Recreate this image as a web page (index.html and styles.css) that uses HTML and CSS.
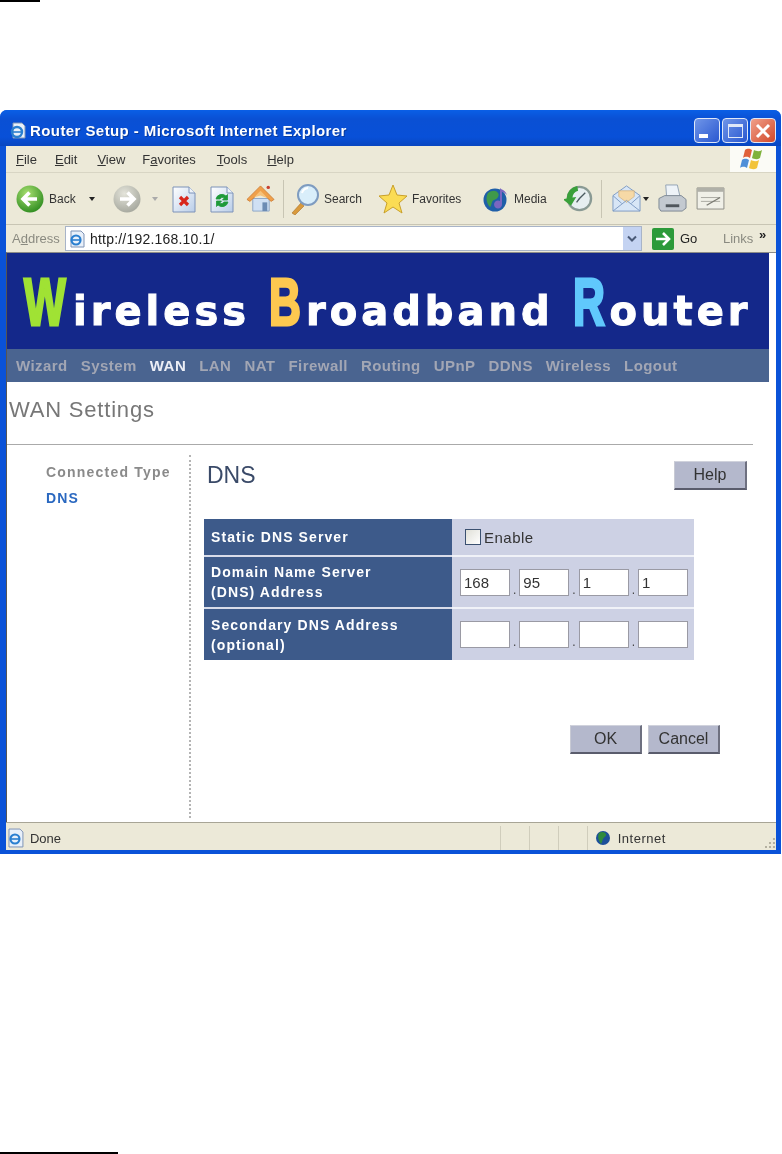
FILE: index.html

```html
<!DOCTYPE html>
<html lang="en">
<head>
  <meta charset="UTF-8">
  <title>Router Setup - Microsoft Internet Explorer</title>
  <link rel="stylesheet" href="styles.css">
</head>
<body>

  <div class="rule rule-top"></div>

  <div class="window">

    <div class="titlebar">
      <svg class="ico-title" viewBox="0 0 18 18">
        <path d="M4 1h9l3 3v12H4z" fill="#e8f0fa" stroke="#7f93b5"/>
        <circle cx="8" cy="10" r="5" fill="none" stroke="#2a7fd0" stroke-width="2.4"/>
        <path d="M3 10h10" stroke="#2a7fd0" stroke-width="1.6"/>
      </svg>
      <span class="title-text">Router Setup - Microsoft Internet Explorer</span>
      <div class="win-buttons">
        <span class="win-btn"><i class="glyph-min"></i></span>
        <span class="win-btn"><i class="glyph-max"></i></span>
        <span class="win-btn win-close">
          <svg viewBox="0 0 16 16" width="16" height="16"><path d="M2 2l12 12M14 2L2 14" stroke="#fff" stroke-width="3"/></svg>
        </span>
      </div>
    </div>

    <div class="menubar">
      <div class="menu-items">
        <span class="m-file"><u>F</u>ile</span>
        <span class="m-edit"><u>E</u>dit</span>
        <span class="m-view"><u>V</u>iew</span>
        <span class="m-fav">F<u>a</u>vorites</span>
        <span class="m-tools"><u>T</u>ools</span>
        <span><u>H</u>elp</span>
      </div>
      <div class="flag">
        <svg viewBox="0 0 26 24" width="26" height="24">
          <path d="M5 3c3-2 5-1 7 0l-2 8c-2-1-4-2-7 0z" fill="#e0613a"/>
          <path d="M14 3c2 1 5 2 8 0l-2 8c-3 2-6 1-8 0z" fill="#7fb23c"/>
          <path d="M2 13c3-2 5-1 7 0l-2 8c-2-1-4-2-7 0z" fill="#4f8fd8"/>
          <path d="M11 13c2 1 5 2 8 0l-2 8c-3 2-6 1-8 0z" fill="#f2c33a"/>
        </svg>
      </div>
    </div>

    <div class="toolbar">
      <svg class="ico ico-back" viewBox="0 0 28 28">
        <defs>
          <radialGradient id="gGreen" cx="40%" cy="30%" r="75%"><stop offset="0" stop-color="#a8e070"/><stop offset="1" stop-color="#2c8a1e"/></radialGradient>
          <radialGradient id="gGrey" cx="40%" cy="30%" r="75%"><stop offset="0" stop-color="#e4e4da"/><stop offset="1" stop-color="#a4a69c"/></radialGradient>
          <linearGradient id="gPage" x1="0" y1="0" x2="1" y2="1"><stop offset="0" stop-color="#ffffff"/><stop offset="1" stop-color="#b9cde8"/></linearGradient>
        </defs>
        <circle cx="14" cy="14" r="13.5" fill="url(#gGreen)"/>
        <path d="M21 14H8M13.5 7.5L7 14l6.5 6.5" fill="none" stroke="#fff" stroke-width="3.6"/>
      </svg>
      <span class="tb-label tb-back">Back</span>
      <i class="caret caret-back"></i>
      <svg class="ico ico-fwd" viewBox="0 0 28 28">
        <circle cx="14" cy="14" r="13.5" fill="url(#gGrey)"/>
        <path d="M7 14h13M14.5 7.5L21 14l-6.5 6.5" fill="none" stroke="#fff" stroke-width="3.6"/>
      </svg>
      <i class="caret caret-fwd"></i>
      <svg class="ico ico-stop" viewBox="0 0 24 28">
        <path d="M1 2h16l6 6v19H1z" fill="url(#gPage)" stroke="#7d92b8"/>
        <path d="M17 2v6h6" fill="#eef3fa" stroke="#7d92b8"/>
        <path d="M8 12l8 8M16 12l-8 8" stroke="#d8261c" stroke-width="3.2"/>
      </svg>
      <svg class="ico ico-refresh" viewBox="0 0 24 28">
        <path d="M1 2h16l6 6v19H1z" fill="url(#gPage)" stroke="#7d92b8"/>
        <path d="M17 2v6h6" fill="#eef3fa" stroke="#7d92b8"/>
        <path d="M6 14a6 6 0 0 1 10-3l1.500-1.500V15h-5l1.800-2a3 3 0 0 0-4.300 1z" fill="#1f9a3a" stroke="#1f9a3a" stroke-width=".8"/>
        <path d="M18 17a6 6 0 0 1-10 3l-1.500 1.500V16h5l-1.800 2a3 3 0 0 0 4.300-1z" fill="#1f9a3a" stroke="#1f9a3a" stroke-width=".8"/>
      </svg>
      <svg class="ico ico-home" viewBox="0 0 30 30">
        <path d="M7 15h17v13H7z" fill="#cfe0f4" stroke="#8ea6c6"/>
        <path d="M17 19h5v9h-5z" fill="#6c8cb4"/>
        <path d="M1 16L15 2l14 14-3 2L15 8 4 18z" fill="#f0a04a" stroke="#c87830" stroke-width=".8"/>
        <path d="M8 14l7-7 8 8-8-3z" fill="#f6c27a"/>
        <circle cx="23" cy="3.5" r="1.8" fill="#c84030"/>
      </svg>
      <i class="tb-sep"></i>
      <svg class="ico ico-search" viewBox="0 0 30 32">
        <path d="M2 30l9-10 3 3-9 9z" fill="#d99a3c" stroke="#a8702a" stroke-width=".6"/>
        <circle cx="18" cy="12" r="10" fill="#d9eefa" stroke="#7f9cc0" stroke-width="2"/>
        <path d="M12 10a7 7 0 0 1 6-5" fill="none" stroke="#fff" stroke-width="2"/>
      </svg>
      <span class="tb-label tb-search">Search</span>
      <svg class="ico ico-star" viewBox="0 0 30 30">
        <path d="M15 1l4 10 10 1-8 7 3 10-9-6-9 6 3-10-8-7 10-1z" fill="#fbdc54" stroke="#c9a02a"/>
      </svg>
      <span class="tb-label tb-fav">Favorites</span>
      <svg class="ico ico-media" viewBox="0 0 30 26">
        <circle cx="12" cy="14" r="11.5" fill="#1f5fa8"/>
        <path d="M5 7c4-3 8-3 10 0s-1 6-4 7-2 6-4 7c-3-3-5-9-2-14z" fill="#3f9a4a"/>
        <path d="M17 2l1 1c3 1 5 3 6 6-2-2-3-3-5-3v12a4 4 0 1 1-2-3z" fill="#7a66c0"/>
      </svg>
      <span class="tb-label tb-media">Media</span>
      <svg class="ico ico-hist" viewBox="0 0 30 30">
        <circle cx="16" cy="15" r="12" fill="#e6eef0" stroke="#8a9a94" stroke-width="2.4"/>
        <path d="M16 15l6-6M16 15l-3 4" stroke="#4a5a60" stroke-width="1.4"/>
        <path d="M3 13a13 13 0 0 1 13-11v5a8 8 0 0 0-7 6h4l-7 8-7-8z" fill="#3aa03a" transform="rotate(-10 15 15)"/>
      </svg>
      <i class="tb-sep tb-sep2"></i>
      <svg class="ico ico-mail" viewBox="0 0 30 30">
        <path d="M1 12L15 2l14 10v16H1z" fill="#d8e6f6" stroke="#7e9cc4"/>
        <path d="M7 13V7h16v6l-8 6z" fill="#f6d9a6" stroke="#c9a56a" stroke-width=".6"/>
        <path d="M1 28l14-11 14 11M1 12l9 8M29 12l-9 8" fill="none" stroke="#7e9cc4"/>
      </svg>
      <i class="caret caret-mail"></i>
      <svg class="ico ico-print" viewBox="0 0 30 30">
        <path d="M8 1h12l3 13H9z" fill="#eef3f8" stroke="#93a3b4"/>
        <path d="M1 15l6-3h17l5 4v9l-4 3H3l-2-3z" fill="#c3c9d0" stroke="#7e8994"/>
        <path d="M8 21h14v3H8z" fill="#50565c"/>
      </svg>
      <svg class="ico ico-edit" viewBox="0 0 30 24">
        <path d="M1 1h28v22H1z" fill="#f0f0e8" stroke="#8c8c84"/>
        <path d="M1 1h28v4H1z" fill="#b0b0a8"/>
        <path d="M5 11h20M5 15h20" stroke="#a8a8a0"/>
        <path d="M11 19l14-8" stroke="#7a7a72" stroke-width="1.4"/>
      </svg>
    </div>

    <div class="addressbar">
      <span class="addr-label">A<u>d</u>dress</span>
      <div class="addr-box">
        <svg class="ico-page" viewBox="0 0 18 18">
          <path d="M3 1h10l3 3v13H3z" fill="#e8f0fa" stroke="#7f93b5"/>
          <circle cx="8" cy="10" r="4.5" fill="none" stroke="#2a7fd0" stroke-width="2.2"/>
          <path d="M3 10h10" stroke="#2a7fd0" stroke-width="1.6"/>
        </svg>
        <span class="addr-url">http://192.168.10.1/</span>
        <span class="addr-drop">
          <svg viewBox="0 0 10 8" width="10" height="8"><path d="M1 1.5l4 4 4-4" fill="none" stroke="#4a5a78" stroke-width="2"/></svg>
        </span>
      </div>
      <span class="go-btn">
        <svg viewBox="0 0 22 22" width="22" height="22">
          <rect width="22" height="22" rx="2" fill="#2c9a3a"/>
          <path d="M4 11h13M11 5l6 6-6 6" fill="none" stroke="#fff" stroke-width="2.6"/>
        </svg>
      </span>
      <span class="go-text">Go</span>
      <span class="links">Links</span>
      <span class="chevrons">&raquo;</span>
    </div>

    <div class="client">
      <div class="banner">
        <span class="big big-w">W</span><span class="rest rest-w">ireless</span>
        <span class="big big-b">B</span><span class="rest rest-b">roadband</span>
        <span class="big big-r">R</span><span class="rest">outer</span>
      </div>

      <nav class="navbar">
        <span>Wizard</span>
        <span>System</span>
        <span class="active">WAN</span>
        <span>LAN</span>
        <span>NAT</span>
        <span>Firewall</span>
        <span>Routing</span>
        <span>UPnP</span>
        <span>DDNS</span>
        <span>Wireless</span>
        <span>Logout</span>
      </nav>

      <h1 class="page-title">WAN Settings</h1>

      <div class="columns">
        <div class="sidebar">
          <div class="side-link">Connected Type</div>
          <div class="side-link current">DNS</div>
        </div>

        <div class="main">
          <div class="main-head">
            <h2>DNS</h2>
            <button class="btn">Help</button>
          </div>

          <table class="dns-table">
            <tr class="row-short">
              <th>Static DNS Server</th>
              <td>
                <label class="enable"><input type="checkbox" class="check">Enable</label>
              </td>
            </tr>
            <tr>
              <th>Domain Name Server<br>(DNS) Address</th>
              <td>
                <div class="ip">
                  <input class="octet" value="168"><i>.</i>
                  <input class="octet" value="95"><i>.</i>
                  <input class="octet" value="1"><i>.</i>
                  <input class="octet" value="1">
                </div>
              </td>
            </tr>
            <tr class="row-last">
              <th>Secondary DNS Address<br>(optional)</th>
              <td>
                <div class="ip">
                  <input class="octet"><i>.</i>
                  <input class="octet"><i>.</i>
                  <input class="octet"><i>.</i>
                  <input class="octet">
                </div>
              </td>
            </tr>
          </table>

          <div class="actions">
            <button class="btn">OK</button>
            <button class="btn">Cancel</button>
          </div>
        </div>
      </div>
    </div>

    <div class="statusbar">
      <svg class="ico-done" viewBox="0 0 18 20">
        <path d="M2 1h11l3 3v15H2z" fill="#e8f0fa" stroke="#7f93b5"/>
        <circle cx="8" cy="11" r="4.5" fill="none" stroke="#2a7fd0" stroke-width="2.2"/>
        <path d="M3 11h10" stroke="#2a7fd0" stroke-width="1.6"/>
      </svg>
      <span class="status-text">Done</span>
      <span class="panel"></span>
      <span class="panel"></span>
      <span class="panel"></span>
      <span class="panel panel-zone">
        <svg viewBox="0 0 14 16" width="14" height="16">
          <circle cx="7" cy="8" r="7" fill="#1d4f9a"/>
          <path d="M3 3c3-2 6-1 7 1s-2 3-3 5-1 4-2 5c-2-3-4-7-2-11z" fill="#2f8a3e"/>
        </svg>
        <span>Internet</span>
      </span>
      <svg class="grip" viewBox="0 0 12 12" width="12" height="12">
        <path d="M9 1h2v2H9zM5 5h2v2H5zM9 5h2v2H9zM1 9h2v2H1zM5 9h2v2H5zM9 9h2v2H9z" fill="#b4b0a0"/>
      </svg>
    </div>
  </div>

  <div class="rule rule-bottom"></div>

</body>
</html>
```

FILE: styles.css

```css
html, body {
  margin: 0;
  padding: 0;
}
body {
  background: #fff;
  min-height: 100vh;
  display: flex;
  flex-direction: column;
  font-family: "Liberation Sans", Arial, sans-serif;
  color: #222;
  overflow: hidden;
}
.rule {
  height: 2px;
  background: #000;
}
.rule-top {
  width: 40px;
}
.rule-bottom {
  width: 118px;
  margin-top: auto;
}

/* browser window */
.window {
  margin: 108px 1px 0 0;
  height: 744px;
  box-sizing: border-box;
  display: flex;
  flex-direction: column;
  background: #0a52d8;
  border-radius: 7px 7px 0 0;
  padding: 0 5px 4px 6px;
  filter: blur(.35px);
}
.titlebar {
  height: 36px;
  box-sizing: border-box;
  flex: none;
  margin: 0 -5px 0 -6px;
  padding: 5px 5px 0 9px;
  display: flex;
  align-items: center;
  border-radius: 7px 7px 0 0;
  background: linear-gradient(#0a5fe6, #0a50d4 25%, #0850d8 75%, #0846c0);
}
.ico-title {
  width: 18px;
  height: 18px;
  margin-right: 3px;
}
.title-text {
  color: #fff;
  font-weight: bold;
  font-size: 15px;
  letter-spacing: .42px;
  text-shadow: 1px 1px 0 #083a9c;
}
.win-buttons {
  margin-left: auto;
  display: flex;
  gap: 2px;
}
.win-btn {
  width: 26px;
  height: 25px;
  box-sizing: border-box;
  border: 1px solid #dfe8f8;
  border-radius: 4px;
  background: linear-gradient(135deg, #6f95e8, #2a58d0);
  display: flex;
  align-items: center;
  justify-content: center;
}
.win-close {
  background: linear-gradient(135deg, #f0a08a, #d2482a);
}
.glyph-min {
  width: 9px;
  height: 4px;
  background: #fff;
  align-self: flex-end;
  margin: 0 8px 4px 0;
}
.glyph-max {
  width: 15px;
  height: 14px;
  box-sizing: border-box;
  border: 1px solid #dfe8f8;
  border-top-width: 3px;
}

.menubar {
  height: 27px;
  flex: none;
  background: #ece9d8;
  border-bottom: 1px solid #d8d5c4;
  box-sizing: border-box;
  display: flex;
  font-size: 13px;
}
.menu-items {
  flex: 1;
  display: flex;
  align-items: center;
  padding-left: 10px;
  color: #333;
}
.m-file { margin-right: 18px; }
.m-edit { margin-right: 20px; }
.m-view { margin-right: 17px; }
.m-fav { margin-right: 21px; }
.m-tools { margin-right: 20px; }
.flag {
  width: 46px;
  background: #fbfbf6;
  display: flex;
  align-items: center;
  justify-content: center;
}

.toolbar {
  height: 51px;
  flex: none;
  background: #ece9d8;
  display: flex;
  align-items: center;
  padding-left: 10px;
  font-size: 12px;
  color: #333;
}
.ico {
  flex: none;
  height: 28px;
}
.ico-back, .ico-fwd { width: 28px; }
.ico-stop, .ico-refresh { width: 24px; }
.ico-home, .ico-hist, .ico-mail, .ico-print { width: 29px; height: 29px; }
.ico-search { width: 30px; height: 32px; }
.ico-star { width: 30px; height: 30px; }
.ico-media { width: 30px; height: 26px; }
.ico-edit { width: 29px; height: 23px; }
.tb-label { flex: none; }
.tb-back { width: 30px; margin-left: 5px; }
.caret {
  flex: none;
  width: 0;
  height: 0;
  border: 3px solid transparent;
  border-top: 4px solid #222;
  border-bottom: 0;
}
.caret-back { margin: 0 18px 0 10px; }
.caret-fwd { margin: 0 14px 0 11px; border-top-color: #aaa; }
.ico-refresh { margin-left: 14px; }
.ico-home { margin-left: 12px; }
.tb-sep {
  flex: none;
  width: 1px;
  height: 38px;
  background: #c8c5b4;
  margin: 0 6px 0 8px;
}
.tb-search { width: 40px; margin: 0 14px 0 4px; }
.tb-fav { width: 56px; margin: 0 15px 0 4px; }
.tb-media { width: 36px; margin: 0 14px 0 1px; }
.tb-sep2 { margin: 0 10px 0 8px; }
.caret-mail { margin: 0 9px 0 2px; }
.ico-edit { margin-left: 9px; }

.addressbar {
  height: 28px;
  flex: none;
  background: #ece9d8;
  border-top: 1px solid #c8c5b4;
  box-sizing: border-box;
  display: flex;
  align-items: center;
  font-size: 13px;
  padding-left: 6px;
}
.addr-label {
  width: 53px;
  flex: none;
  color: #8a8a80;
}
.addr-box {
  width: 577px;
  flex: none;
  height: 25px;
  box-sizing: border-box;
  background: #fff;
  border: 1px solid #a8b4c8;
  display: flex;
  align-items: center;
  padding-left: 2px;
  color: #222;
}
.addr-url {
  font-size: 14px;
  letter-spacing: .2px;
}
.ico-page {
  width: 18px;
  height: 18px;
  margin-right: 4px;
}
.addr-drop {
  margin-left: auto;
  width: 18px;
  height: 23px;
  background: #c4d3f2;
  display: flex;
  align-items: center;
  justify-content: center;
}
.go-btn {
  display: flex;
  margin-left: 10px;
}
.go-text {
  margin-left: 6px;
  width: 43px;
}
.links {
  color: #8a8a80;
  width: 36px;
}
.chevrons {
  font-weight: bold;
  font-size: 13px;
  margin-top: -8px;
}

/* router page */
.client {
  flex: 1;
  background: #fff;
  display: flex;
  flex-direction: column;
  border-left: 1px solid #555;
  border-top: 1px solid #8c8c88;
  min-height: 0;
}
.banner {
  width: 762px;
  height: 96px;
  box-sizing: border-box;
  background: #14288a;
  padding: 19px 0 0 16px;
  display: flex;
  align-items: baseline;
  font-family: "DejaVu Sans", sans-serif;
  font-weight: bold;
  color: #fff;
  white-space: nowrap;
}
.big {
  font-family: "Liberation Sans", Arial, sans-serif;
  font-size: 67px;
  line-height: 60px;
  display: inline-block;
  transform: scaleX(.66);
  transform-origin: left;
  -webkit-text-stroke: 3px currentColor;
}
.big-w { width: 49px; color: #a0e234; margin-left: 1px; }
.big-b { width: 37px; color: #fdc850; margin-left: 19px; }
.big-r { width: 37px; color: #60c8fc; margin-left: 19px; }
.rest {
  font-size: 40px;
  letter-spacing: 4px;
  -webkit-text-stroke: 1px #fff;
}
.navbar {
  width: 762px;
  height: 33px;
  box-sizing: border-box;
  background: #4a6490;
  display: flex;
  align-items: center;
  gap: 13px;
  padding-left: 9px;
  font-size: 15px;
  font-weight: bold;
  letter-spacing: .45px;
  color: #a2a6b4;
}
.navbar .active {
  color: #eceef6;
}
.page-title {
  margin: 0;
  width: 746px;
  height: 63px;
  box-sizing: border-box;
  padding: 15px 0 0 2px;
  border-bottom: 1px solid #aaa;
  font-size: 22px;
  line-height: 26px;
  font-weight: normal;
  letter-spacing: .8px;
  color: #777;
}
.columns {
  flex: 1;
  display: flex;
  padding-top: 10px;
  padding-bottom: 4px;
  min-height: 0;
}
.sidebar {
  width: 184px;
  box-sizing: border-box;
  border-right: 2px dotted #b4b4b4;
  padding: 8px 0 0 39px;
  font-size: 14px;
  font-weight: bold;
  letter-spacing: 1.2px;
}
.side-link {
  height: 26px;
  line-height: 18px;
  color: #8a8a8a;
}
.side-link.current {
  color: #2a68c0;
}
.main {
  flex: 1;
  padding-left: 13px;
}
.main-head {
  width: 543px;
  height: 64px;
  box-sizing: border-box;
  padding-top: 6px;
  display: flex;
  justify-content: space-between;
  align-items: flex-start;
}
.main-head h2 {
  margin: 0 0 0 3px;
  font-size: 23px;
  line-height: 28px;
  font-weight: normal;
  color: #3a4a68;
}
.btn {
  width: 73px;
  height: 29px;
  box-sizing: border-box;
  padding: 0;
  background: #b4b8cc;
  border: 1px solid;
  border-color: #d0d2dc #6e7080 #5a5c6c #c8cad4;
  border-width: 1px 2px 2px 1px;
  color: #333;
  font-family: "Liberation Sans", Arial, sans-serif;
  font-size: 16px;
}
.dns-table {
  width: 490px;
  border-collapse: separate;
  border-spacing: 0;
}
.dns-table th {
  width: 248px;
  height: 52px;
  box-sizing: border-box;
  padding: 0 0 0 7px;
  background: #3d5a8a;
  border-bottom: 2px solid #d8dcea;
  color: #fff;
  text-align: left;
  font-size: 14px;
  line-height: 20px;
  letter-spacing: 1.1px;
}
.dns-table td {
  padding: 0 0 0 8px;
  background: #cdd1e4;
  border-bottom: 2px solid #f0f2f8;
}
.dns-table .row-last th,
.dns-table .row-last td {
  border-bottom: 0;
}
.dns-table .row-last th {
  height: 51px;
}
.dns-table .row-short th {
  height: 38px;
}
.enable {
  display: flex;
  align-items: center;
  font-size: 15px;
  letter-spacing: .5px;
  color: #333;
  padding-left: 5px;
}
.check {
  appearance: none;
  width: 16px;
  height: 16px;
  margin: 0 3px 0 0;
  border: 1px solid #3a5070;
  background: linear-gradient(135deg, #e0e0d8, #fff);
}
.ip {
  display: flex;
  align-items: flex-end;
}
.ip i {
  width: 9.33px;
  text-align: center;
  font-style: normal;
  font-size: 12px;
  line-height: 12px;
  color: #444;
}
.octet {
  width: 50px;
  height: 27px;
  box-sizing: border-box;
  padding: 0 3px;
  border: 1px solid #9a9aa4;
  background: #fff;
  color: #333;
  font-family: "Liberation Sans", Arial, sans-serif;
  font-size: 15px;
}
.actions {
  width: 516px;
  margin-top: 65px;
  display: flex;
  justify-content: flex-end;
  gap: 6px;
}
.actions .btn {
  width: 72px;
}

.statusbar {
  height: 28px;
  flex: none;
  background: #ece9d8;
  border-top: 1px solid #a8a596;
  box-sizing: border-box;
  display: flex;
  align-items: center;
  font-size: 13px;
  color: #333;
  padding: 3px 0 0 1px;
}
.ico-done {
  width: 18px;
  height: 20px;
}
.status-text {
  width: 472px;
  margin-left: 5px;
}
.panel {
  width: 29px;
  height: 100%;
  box-sizing: border-box;
  border-left: 1px solid #d0cdbc;
}
.panel-zone {
  width: 178px;
  display: flex;
  align-items: center;
  gap: 8px;
  padding-left: 8px;
  letter-spacing: .5px;
}
.grip {
  margin: 10px 0 0 auto;
}
```
